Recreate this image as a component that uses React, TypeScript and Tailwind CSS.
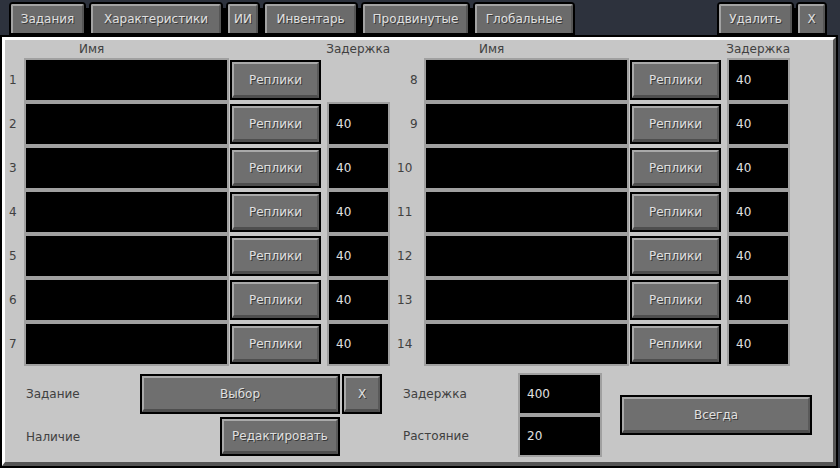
import React from "react";

function Tab({ label, w }: { label: string; w: string }) {
  return (
    <div className={`${w} h-[33px] border-2 border-black rounded-t-[4px] bg-[#6b6b6b] overflow-hidden`}>
      <div className="h-full border-t-2 border-l-2 border-r-2 border-t-[#a3a3a3] border-l-[#a3a3a3] border-r-[#555555] flex items-center justify-center pb-[2px] text-[#e0e0e0] [text-shadow:1px_1px_0_#3a3a3a]">
        {label}
      </div>
    </div>
  );
}

function TabGap() {
  return <div className="w-[3px] h-[27px] self-end bg-black" />;
}

function McButton({ label, className }: { label: string; className: string }) {
  return (
    <div className={`border-2 border-black ${className}`}>
      <div className="h-full bg-[#6f6f6f] border-t-2 border-l-2 border-t-[#a9a9a9] border-l-[#a9a9a9] border-b-[3px] border-r-2 border-b-[#4e4e4e] border-r-[#5a5a5a] flex items-center justify-center text-[#e0e0e0] [text-shadow:1px_1px_0_#383838]">
        {label}
      </div>
    </div>
  );
}

function Field({ value, className }: { value?: string; className: string }) {
  return (
    <div className={`border-2 border-[#a0a0a0] bg-black flex items-center pl-[7px] text-[#e0e0e0] ${className}`}>
      {value}
    </div>
  );
}

function Row({ n }: { n: number }) {
  const first = n === 1;
  return (
    <div className="flex h-[44px]">
      <div className="w-[19px] flex items-center text-[#404040]">
        {n > 9 ? (
          <span className="-ml-[8px]">{n}</span>
        ) : (
          <span className={n > 7 ? "pl-[5px]" : "pl-[4px]"}>{n}</span>
        )}
      </div>
      <Field className="w-[205px] h-[44px]" />
      <McButton label="Реплики" className="ml-[1px] w-[91px] h-[40px] self-center" />
      {first ? (
        <div className="ml-[6px] w-[63px]" />
      ) : (
        <Field value="40" className="ml-[6px] w-[63px] h-[44px]" />
      )}
    </div>
  );
}

function Header() {
  return (
    <div className="flex w-[385px] h-[18px] items-center text-[#404040]">
      <span className="pl-[74px] w-[322px]">Имя</span>
      <span>Задержка</span>
    </div>
  );
}

export default function App() {
  const left = [1, 2, 3, 4, 5, 6, 7];
  const right = [8, 9, 10, 11, 12, 13, 14];
  return (
    <div className="w-[840px] h-[468px] bg-[#2d323d] overflow-hidden font-['DejaVu_Sans',sans-serif] text-[12px] leading-none">
      {/* tabs */}
      <div className="flex h-[35px] pt-[2px] pl-[9px]">
        <Tab label="Задания" w="w-[77px]" />
        <TabGap />
        <Tab label="Характеристики" w="w-[134px]" />
        <TabGap />
        <Tab label="ИИ" w="w-[34px]" />
        <TabGap />
        <Tab label="Инвентарь" w="w-[95px]" />
        <TabGap />
        <Tab label="Продвинутые" w="w-[109px]" />
        <TabGap />
        <Tab label="Глобальные" w="w-[102px]" />
        <div className="ml-auto flex">
          <Tab label="Удалить" w="w-[77px]" />
          <div className="w-[2px] h-[27px] self-end bg-black" />
          <Tab label="X" w="w-[31px]" />
        </div>
        <div className="w-[13px]" />
      </div>

      {/* panel */}
      <div className="w-[838px] h-[433px] border-2 border-black bg-[#c6c6c6]">
        <div className="h-full border-t-[3px] border-l-[3px] border-b-[4px] border-r-[3px] border-t-white border-l-white border-b-[#555555] border-r-[#555555]">
          <div className="flex gap-[15px]">
            <div className="flex flex-col w-[385px]">
              <Header />
              {left.map((n) => (
                <Row key={n} n={n} />
              ))}
            </div>
            <div className="flex flex-col w-[385px]">
              <Header />
              {right.map((n) => (
                <Row key={n} n={n} />
              ))}
            </div>
          </div>

          {/* bottom */}
          <div className="flex mt-[7px] text-[#404040]">
            <div className="w-[398px] pl-[21px] pt-[1px] flex flex-col gap-[3px]">
              <div className="flex items-center h-[40px]">
                <span className="w-[114px]">Задание</span>
                <McButton label="Выбор" className="w-[200px] h-[40px]" />
                <McButton label="X" className="ml-[2px] w-[40px] h-[40px]" />
              </div>
              <div className="flex items-center h-[39px]">
                <span className="w-[194px]">Наличие</span>
                <McButton label="Редактировать" className="w-[120px] h-[39px]" />
              </div>
            </div>
            <div className="flex flex-col">
              <div className="flex items-center">
                <span className="w-[115px]">Задержка</span>
                <Field value="400" className="w-[84px] h-[42px]" />
              </div>
              <div className="flex items-center">
                <span className="w-[115px]">Растояние</span>
                <Field value="20" className="w-[84px] h-[42px]" />
              </div>
            </div>
            <div className="flex items-center pl-[18px]">
              <McButton label="Всегда" className="w-[192px] h-[40px]" />
            </div>
          </div>
        </div>
      </div>
    </div>
  );
}
